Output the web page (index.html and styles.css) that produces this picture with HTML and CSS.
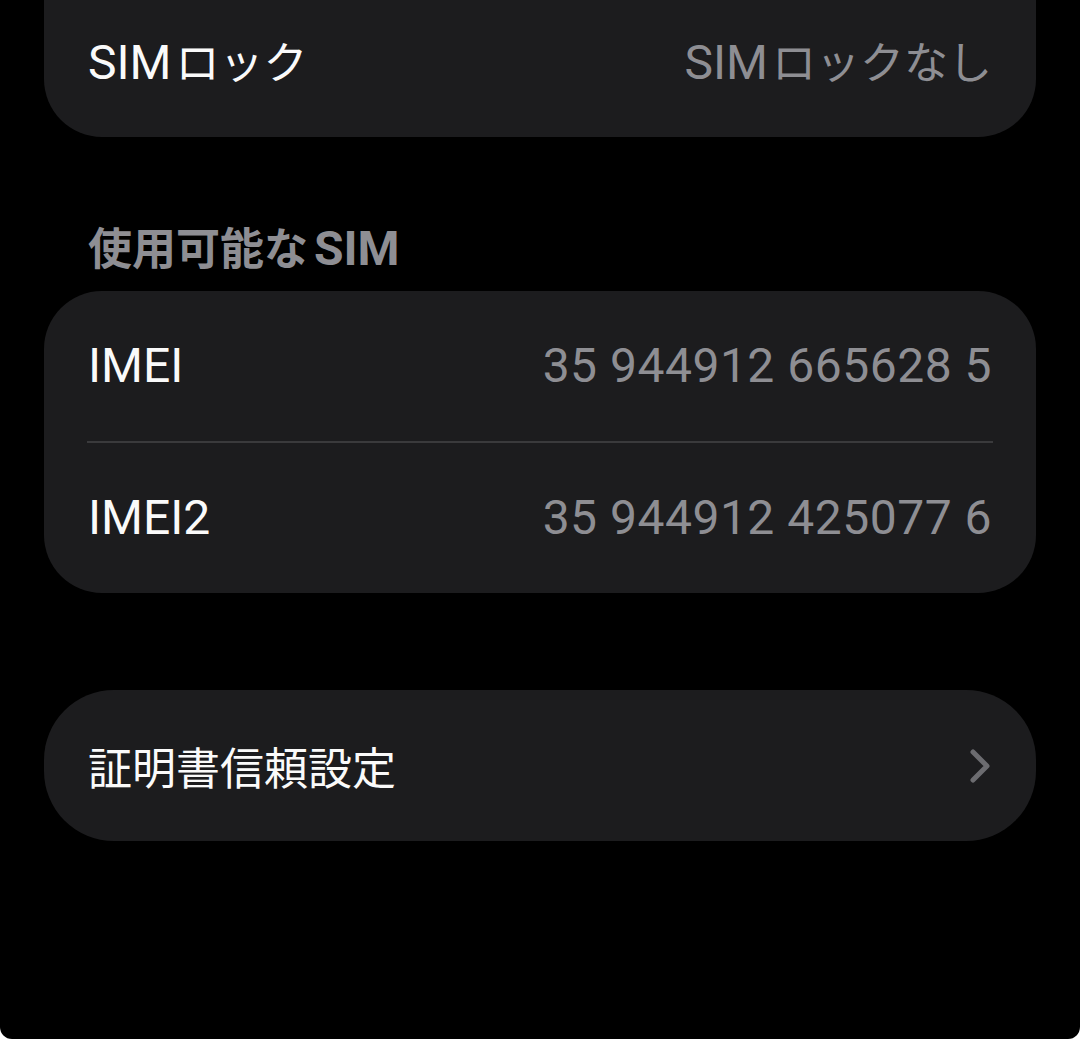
FILE: index.html
```html
<!DOCTYPE html>
<html lang="ja">
<head>
<meta charset="utf-8">
<title>SIM</title>
<link rel="stylesheet" href="styles.css">
</head>
<body>
<div class="screen">
  <div class="card card-top">
    <div class="row">
      <span class="label">SIM<span class="ja gap">ロック</span></span>
      <span class="value">SIM<span class="ja gap">ロックなし</span></span>
    </div>
  </div>

  <div class="section-header"><span class="ja">使用可能な</span><span class="gap-l">SIM</span></div>

  <div class="card">
    <div class="row">
      <span class="label">IMEI</span>
      <span class="value num">35 944912 665628 5</span>
    </div>
    <div class="divider"></div>
    <div class="row">
      <span class="label">IMEI2</span>
      <span class="value num">35 944912 425077 6</span>
    </div>
  </div>

  <div class="card card-link">
    <div class="row">
      <span class="label ja">証明書信頼設定</span>
      <svg class="chevron" width="24" height="36" viewBox="0 0 24 36" aria-hidden="true">
        <path d="M5 4 L19 18 L5 32" fill="none" stroke="#6c6c70" stroke-width="5" stroke-linecap="round" stroke-linejoin="round"/>
      </svg>
    </div>
  </div>
</div>
</body>
</html>
```

FILE: styles.css
```css
* { box-sizing: border-box; }

html, body {
  margin: 0;
  padding: 0;
  background: #ffffff;
}

body {
  font-family: Roboto, "Noto Sans CJK JP", sans-serif;
  -webkit-font-smoothing: antialiased;
}

.screen {
  background: #000000;
  min-height: 1039px;
  padding: 0 44px;
  border-radius: 0 0 12px 12px;
  overflow: hidden;
  display: flex;
  flex-direction: column;
}

.card {
  background: #1c1c1e;
  border-radius: 58px;
  padding: 0 44px 0 44px;
  flex-shrink: 0;
}

.card-top {
  margin-top: -13px;
  border-radius: 0 0 58px 58px;
  height: 150px;
}

.row {
  display: flex;
  align-items: center;
  justify-content: space-between;
  height: 150px;
}

.label,
.value {
  font-size: 48px;
  line-height: 1;
  white-space: nowrap;
}

.label {
  color: #fafafa;
}

.value {
  color: #8e8e93;
}

.num {
  letter-spacing: 0.5px;
}

.ja {
  font-family: "Noto Sans CJK JP", sans-serif;
  font-size: 44px;
}

.label.ja {
  font-size: 44px;
}

.gap {
  margin-left: 4px;
}

.gap-l {
  margin-left: 6px;
}

.divider {
  height: 2px;
  background: #3a3a3c;
  margin-right: -1px;
  margin-left: -1px;
}

.section-header {
  color: #8e8e93;
  font-size: 48px;
  font-weight: 700;
  height: 154px;
  flex-shrink: 0;
  padding: 84px 0 0 44px;
  display: flex;
  align-items: baseline;
  white-space: nowrap;
}

.section-header span {
  line-height: 50px;
}

.card-link {
  margin-top: 97px;
  border-radius: 70px;
}

.card-link .row {
  height: 151px;
}

.chevron {
  display: block;
}
```
